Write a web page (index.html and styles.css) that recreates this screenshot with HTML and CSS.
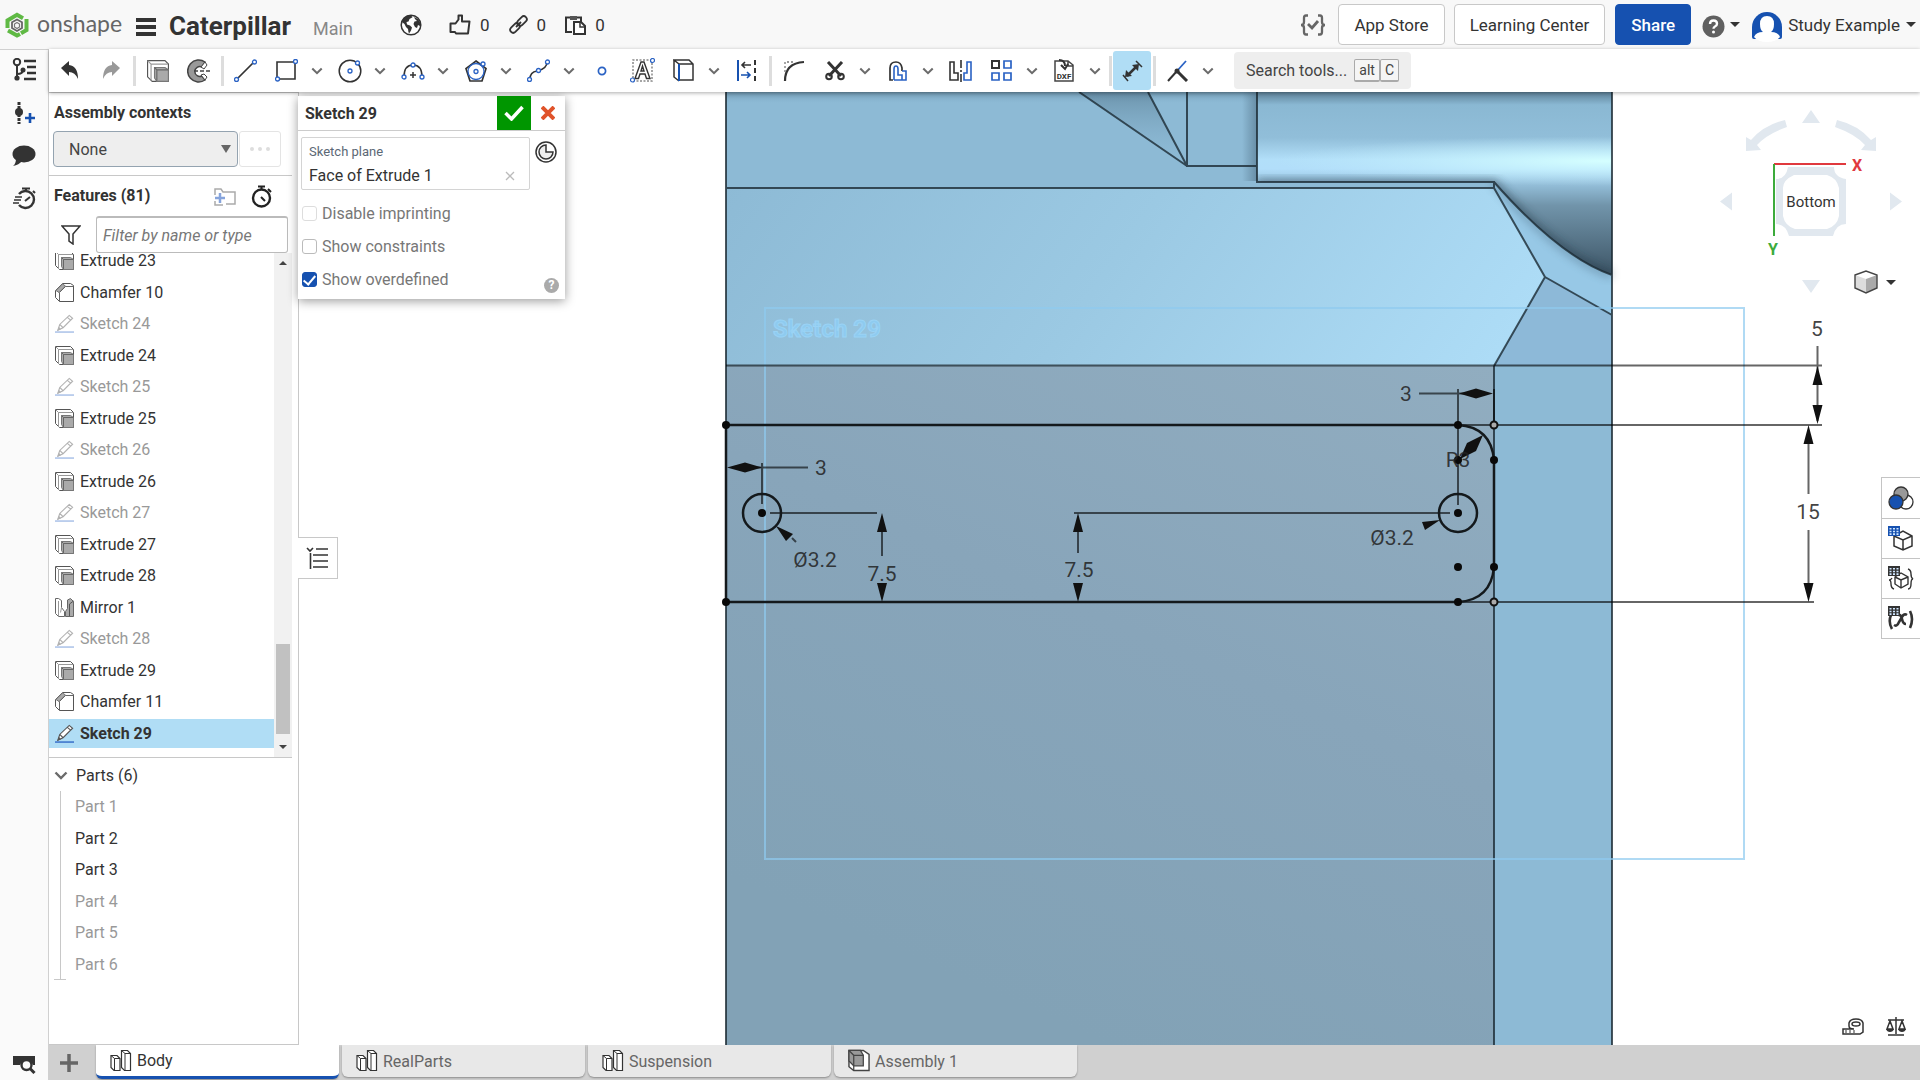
FILE: index.html
```html
<!DOCTYPE html>
<html lang="en">
<head>
<meta charset="utf-8">
<title>Caterpillar | Body</title>
<link rel="stylesheet" href="styles.css">
</head>
<body>
<svg class="defs" aria-hidden="true">
  <symbol id="chev" viewBox="0 0 14 9"><path d="M1.500 1.500l5.500 5.500 5.500-5.500" fill="none" stroke="#6b6b6b" stroke-width="2.400"/></symbol>
  <symbol id="extrude" viewBox="0 0 19 19"><path d="M.5.500h15l3 3v15h-14l-4-4z" fill="#fff" stroke="#555"/><path d="M3.500 18V3.500H18M.5.500l3 3" fill="none" stroke="#999"/><path d="M6.500 6.500h9l3 2v10h-10l-2-3z" fill="#aaa" stroke="#777"/><path d="M8.500 18V8.500h10M6.500 6.500l2 2" fill="none" stroke="#666"/></symbol>
  <symbol id="chamfer" viewBox="0 0 19 19"><path d="M.5 7.500l7-7h8l3 2v16h-14l-4-4z" fill="#fff" stroke="#555"/><path d="M1 7.500L7.500 1l3 2-6.500 6.500z" fill="#aaa" stroke="#777"/><path d="M4.500 18.500v-9l6-6h8" fill="none" stroke="#666"/></symbol>
  <symbol id="pencil" viewBox="0 0 20 20"><path d="M3 17l2-6L15 1.500l3.500 3L8.500 14.500zM5 11l3.500 3.500M13 3.500l3.500 3" fill="#fff" stroke="#555" stroke-width="1.200"/><path d="M2.500 17.500l1.500-4 2.500 2.500z" fill="#555"/><path d="M0 19h20" stroke="#2a62c4" stroke-width="1.400"/></symbol>
  <symbol id="mirror" viewBox="0 0 19 19"><path d="M.5.500h3l3 2v7l3 4v5h-6l-3-3z" fill="#fff" stroke="#666"/><path d="M3.500 3v15.500M6.500 9.500l-1 5" fill="none" stroke="#999"/><path d="M12.500 2l3-1.500 3 3v15h-8v-5l2-3z" fill="#aaa" stroke="#666"/><path d="M14.500 18V6l4-3" fill="none" stroke="#555"/></symbol>
  <symbol id="studio" viewBox="0 0 22 24"><path d="M1 6.500h6l3 3v12H4l-3-3z" fill="#fff" stroke="#333" stroke-width="1.200"/><path d="M1 6.500l3.500 3v12M4.500 9.500H10" fill="none" stroke="#333"/><path d="M11.500 1.500h6l3 3v17h-6l-3-3z" fill="#fff" stroke="#333" stroke-width="1.200"/><path d="M11.500 1.500l3.500 3v17M15 4.500h5.500" fill="none" stroke="#333"/></symbol>
  <symbol id="table" viewBox="0 0 12 10"><path d="M0 0h12v10H0z" fill="currentColor"/><path d="M1.500 2h2v1.600h-2zm3.500 0h2v1.600H5zm3.500 0h2v1.600h-2zm-7 2.700h2v1.600h-2zm3.500 0h2v1.600H5zm3.500 0h2v1.600h-2zm-7 2.600h2V9h-2zm3.500 0h2V9H5zm3.500 0h2V9h-2z" fill="#cfe6ff"/></symbol>
</svg>

<div class="app">
<header class="topbar">
  <a class="brand" href="#">
    <svg width="24" height="26" viewBox="0 0 24 26"><g fill="none" stroke="#5fb944" stroke-width="4"><path d="M2.500 16V8.500L12 2.800l6 3.400"/><path d="M21.500 7v11L16 21.200"/><path d="M3 18.500l9 5 3-1.600"/></g><path d="M12 7.500l5 2.800v5.800l-5 2.900-5-2.900v-5.800z" fill="none" stroke="#666" stroke-width="1.800"/><path d="M12 10.500l2.500 1.500v3L12 16.500 9.500 15v-3z" fill="none" stroke="#777" stroke-width="1.200"/></svg>
    <span class="wordmark">onshape</span>
  </a>
  <button class="icon menu" aria-label="Menu"><svg width="20" height="20" viewBox="0 0 20 20"><path d="M0 3h20M0 10h20M0 17h20" stroke="#333" stroke-width="4"/></svg></button>
  <h1>Caterpillar</h1>
  <span class="branch">Main</span>
  <div class="social">
    <svg class="globe" width="22" height="22" viewBox="0 0 22 22"><circle cx="11" cy="11" r="9.800" fill="#fff" stroke="#333" stroke-width="1.500"/><path d="M3 5c2-3 5-3.800 8-3.800l1.500 2-3 1.800-1 2.500-2 .5.500 2.500 3 1 2 2-1 3-1.500 2.500-1-.5-.5-3.500-2-2-1.500-3L2 8zM14 3l4 2 2.500 4-.5 3-2-1-1 3-2-1-1.500-3 1-2.500 2.500-.5L15 5z" fill="#333"/></svg>
    <button class="stat"><svg width="22" height="22" viewBox="0 0 22 22"><path d="M1.500 9.500h5l3-4V1.500h3.500v6h7.500l-1.500 12H7l-1-1.500H1.500z" fill="none" stroke="#333" stroke-width="2" stroke-linejoin="round"/></svg>0</button>
    <button class="stat"><svg width="19" height="19" viewBox="0 0 19 19"><g fill="none" stroke="#333" stroke-width="1.800"><rect x="7.500" y="3" width="11" height="6" rx="3" transform="rotate(-45 13 6)"/><rect x=".5" y="10" width="11" height="6" rx="3" transform="rotate(-45 6 13)"/><path d="M7 12l5-5"/></g></svg>0</button>
    <button class="stat"><svg width="21" height="20" viewBox="0 0 21 20"><path d="M7 17H1V2.500h15V7" fill="none" stroke="#333" stroke-width="2"/><path d="M5 1h7v4H5z" fill="#555"/><path d="M9 7h7l4 4v8H9z" fill="#fff" stroke="#333" stroke-width="2"/><path d="M15 7v5h5" fill="none" stroke="#333" stroke-width="1.500"/></svg>0</button>
  </div>
  <div class="account">
    <button class="icon" aria-label="Checks"><svg width="26" height="22" viewBox="0 0 26 22"><path d="M8 1.500H6Q4 1.500 4 4v4q0 3-3 3 3 0 3 3v4q0 2.500 2 2.500h2M18 1.500h2q2 0 2 2.500v4q0 3 3 3-3 0-3 3v4q0 2.500-2 2.500h-2" fill="none" stroke="#666" stroke-width="2.300"/><path d="M8 10l4 4 6-7" fill="none" stroke="#666" stroke-width="2.800"/></svg></button>
    <button class="btn">App Store</button>
    <button class="btn learn">Learning Center</button>
    <button class="btn share">Share</button>
    <button class="icon help" aria-label="Help"><svg width="23" height="23" viewBox="0 0 23 23"><circle cx="11.500" cy="11.500" r="11" fill="#606060"/><path d="M8 9q0-3.500 3.500-3.500T15 8.800q0 1.800-2 2.700-1.500.8-1.500 2.300" fill="none" stroke="#fff" stroke-width="2.400"/><circle cx="11.500" cy="17" r="1.500" fill="#fff"/></svg><i class="caret"></i></button>
    <button class="icon user"><svg width="30" height="30" viewBox="0 0 30 30"><path d="M0 15a15 15 0 0 1 30 0v10q0 2-2 2H2q-2 0-2-2z" fill="#1651b0"/><path d="M8 12q0-8 7-8t7 8q0 6-3 8 7 0 9 5-4 5-13 5T2 25q2-5 9-5-3-2-3-8z" fill="#fff"/></svg><span>Study Example</span><i class="caret"></i></button>
  </div>
</header>

<nav class="rail" aria-label="Panels">
  <button class="icon" aria-label="Feature list"><svg width="24" height="23" viewBox="0 0 24 23"><g fill="none" stroke="#333" stroke-width="2"><circle cx="5" cy="4" r="3.200"/><path d="M5 7v13M5 16q6 0 6-4"/><path d="M12 3h12M15 9h9M15 15h9M12 21h12" stroke-width="2.500"/></g><circle cx="5" cy="20" r="2.600" fill="#333"/><circle cx="11" cy="12" r="2.500" fill="#333"/></svg></button>
  <button class="icon" aria-label="Insert"><svg width="22" height="24" viewBox="0 0 22 24"><path d="M6 1v22" stroke="#333" stroke-width="3" stroke-dasharray="3 1"/><circle cx="6" cy="11" r="4" fill="#333"/><path d="M12 17h10M17 12v10" stroke="#1651b0" stroke-width="2.600"/></svg></button>
  <button class="icon" aria-label="Comments"><svg width="24" height="22" viewBox="0 0 24 22"><ellipse cx="12" cy="9" rx="11.500" ry="8.500" fill="#333"/><path d="M4 13q0 6-3 8 6-1 9-5z" fill="#333"/></svg></button>
  <button class="icon" aria-label="Performance"><svg width="23" height="23" viewBox="0 0 23 23"><path d="M6 7a8.500 8.500 0 1 1 0 11" fill="none" stroke="#333" stroke-width="2.400"/><path d="M9 1.500h8M13 2v3M20 4l2 2M12 14l5-4" stroke="#333" stroke-width="2"/><path d="M2 10h7M1 13h7M0 16h6" stroke="#333" stroke-width="1.400"/></svg></button>
  <button class="icon last" aria-label="Search tabs"><svg width="24" height="20" viewBox="0 0 24 20"><path d="M1 2h22v9h-2a7 7 0 0 0-13 0H1z" fill="#333"/><circle cx="14.500" cy="11" r="5" fill="#fafafa" stroke="#333" stroke-width="2.400"/><path d="M18 14.500l4.500 4.500" stroke="#333" stroke-width="3"/></svg></button>
</nav>

<div class="toolbar">
  <button class="tool" aria-label="Undo"><svg width="18" height="19" viewBox="0 0 18 19"><path d="M0 7l8-7v4q9 1 9 14-3-7-9-7v4z" fill="#333"/></svg></button>
  <button class="tool" aria-label="Redo"><svg width="18" height="19" viewBox="0 0 18 19"><path d="M18 7l-8-7v4Q1 5 1 18q3-7 9-7v4z" fill="#999"/></svg></button>
  <i class="sep"></i>
  <button class="tool" aria-label="Extrude"><svg width="22" height="22"><use href="#extrude"/></svg></button>
  <button class="tool" aria-label="Revolve"><svg width="23" height="24" viewBox="0 0 23 24"><path d="M18 3A11 11 0 1 0 18 21l-3-4a5 5 0 1 1 0-9z" fill="#999" stroke="#444" stroke-width="1.500"/><path d="M14 8l4-5 2 3-3 4zM14 16l4 5 2-3-3-3z" fill="#fff" stroke="#444"/><path d="M7 12h16" stroke="#444" stroke-width="1.500" stroke-dasharray="4 2"/></svg></button>
  <i class="sep"></i>
  <button class="tool" aria-label="Line"><svg width="23" height="23" viewBox="0 0 23 23"><path d="M4 19L19 4" stroke="#333" stroke-width="1.700"/><g fill="#fff" stroke="#2a62c4" stroke-width="1.300"><circle cx="20.500" cy="3" r="2"/><circle cx="2.500" cy="20.500" r="2"/></g></svg></button>
  <button class="tool" aria-label="Rectangle"><svg width="23" height="23" viewBox="0 0 23 23"><path d="M2 3h18v17H2z" fill="none" stroke="#333" stroke-width="1.600"/><g fill="#fff" stroke="#2a62c4" stroke-width="1.300"><circle cx="20.500" cy="2.500" r="2"/><circle cx="2.500" cy="20" r="2"/></g></svg></button>
  <button class="drop" aria-label="More rectangles"><svg width="12" height="8"><use href="#chev"/></svg></button>
  <button class="tool" aria-label="Circle"><svg width="24" height="24" viewBox="0 0 24 24"><circle cx="12" cy="12" r="10.800" fill="none" stroke="#333" stroke-width="1.500"/><g fill="#fff" stroke="#2a62c4" stroke-width="1.300"><circle cx="12" cy="12" r="2"/><circle cx="19.500" cy="4" r="2"/></g></svg></button>
  <button class="drop" aria-label="More circles"><svg width="12" height="8"><use href="#chev"/></svg></button>
  <button class="tool" aria-label="Arc"><svg width="24" height="18" viewBox="0 0 24 18"><path d="M3 15q0-12 9-12t9 12" fill="none" stroke="#333" stroke-width="1.600"/><path d="M9 13h6M12 10v6" stroke="#333" stroke-width="1.500"/><g fill="#fff" stroke="#2a62c4" stroke-width="1.300"><circle cx="12" cy="3" r="2"/><circle cx="3" cy="15" r="2"/><circle cx="21" cy="15" r="2"/></g></svg></button>
  <button class="drop" aria-label="More arcs"><svg width="12" height="8"><use href="#chev"/></svg></button>
  <button class="tool" aria-label="Polygon"><svg width="24" height="24" viewBox="0 0 24 24"><path d="M12 2l10 7.500-4 12.500H6L2 9.500z" fill="none" stroke="#333" stroke-width="1.700"/><circle cx="12" cy="12.500" r="8" fill="none" stroke="#2a62c4" stroke-width="1.300"/><g fill="#fff" stroke="#2a62c4" stroke-width="1.300"><circle cx="12" cy="12.500" r="2"/><circle cx="19" cy="5" r="2"/></g></svg></button>
  <button class="drop" aria-label="More polygons"><svg width="12" height="8"><use href="#chev"/></svg></button>
  <button class="tool" aria-label="Spline"><svg width="23" height="23" viewBox="0 0 23 23"><path d="M3 20q0-7 7-8 10-2 10-9" fill="none" stroke="#333" stroke-width="1.600"/><g fill="#fff" stroke="#2a62c4" stroke-width="1.300"><circle cx="20.500" cy="3" r="2"/><circle cx="11.500" cy="11.500" r="2"/><circle cx="2.500" cy="20.500" r="2"/></g></svg></button>
  <button class="drop" aria-label="More splines"><svg width="12" height="8"><use href="#chev"/></svg></button>
  <button class="tool" aria-label="Point"><svg width="10" height="10" viewBox="0 0 10 10"><circle cx="5" cy="5" r="3.600" fill="#fff" stroke="#2a62c4" stroke-width="1.700"/></svg></button>
  <button class="tool" aria-label="Text"><svg width="25" height="25" viewBox="0 0 25 25"><path d="M3 20V2h18M22 5v18H5" fill="none" stroke="#888" stroke-width="1.500" stroke-dasharray="2 1.500"/><path d="M5 20.500L11 4h3l6 16.500h-3.500L15 16h-5l-1.500 4.500zM11 13h3l-1.500-5z" fill="#fff" stroke="#333" stroke-width="1.400"/><g fill="#fff" stroke="#2a62c4" stroke-width="1.200"><circle cx="22.500" cy="2.500" r="2"/><circle cx="2.500" cy="22" r="2"/></g></svg></button>
  <button class="tool" aria-label="Use"><svg width="21" height="23" viewBox="0 0 21 23"><path d="M6 5L1 1h15l4 4v16H6M6 5h14M1 1v17l5 4" fill="none" stroke="#333" stroke-width="1.500"/><path d="M6 5v17" stroke="#1651b0" stroke-width="2"/></svg></button>
  <button class="drop" aria-label="More use tools"><svg width="12" height="8"><use href="#chev"/></svg></button>
  <button class="tool" aria-label="Construction"><svg width="21" height="23" viewBox="0 0 21 23"><path d="M2 1v21" stroke="#1651b0" stroke-width="2"/><path d="M19 1v21" stroke="#333" stroke-width="2" stroke-dasharray="5 3"/><path d="M6 6h9M9 3L6 6l3 3" fill="none" stroke="#333" stroke-width="1.600"/><path d="M5 16h9M11 13l3 3-3 3" fill="none" stroke="#1651b0" stroke-width="1.600"/></svg></button>
  <i class="sep"></i>
  <button class="tool" aria-label="Fillet"><svg width="22" height="22" viewBox="0 0 22 22"><path d="M2 21Q2 3 21 2" fill="none" stroke="#333" stroke-width="2.200"/><path d="M2 12V2h10" fill="none" stroke="#777" stroke-width="1.300" stroke-dasharray="2 2"/></svg></button>
  <button class="tool" aria-label="Trim"><svg width="20" height="20" viewBox="0 0 20 20"><path d="M3 1l13 14M17 1L4 15" stroke="#333" stroke-width="3"/><g fill="none" stroke="#333" stroke-width="2"><circle cx="4" cy="15.500" r="2.800"/><circle cx="16" cy="15.500" r="2.800"/></g></svg></button>
  <button class="drop" aria-label="More trim tools"><svg width="12" height="8"><use href="#chev"/></svg></button>
  <button class="tool" aria-label="Offset"><svg width="20" height="22" viewBox="0 0 20 22"><path d="M5 20H2V8q0-6 6-6 5 0 6 6v3" fill="none" stroke="#333" stroke-width="1.700"/><path d="M6 20V9q0-3 2-3t2 3v6h4v5H6M14 11h4v9h-4" fill="none" stroke="#2a62c4" stroke-width="1.600"/></svg></button>
  <button class="drop" aria-label="More offset tools"><svg width="12" height="8"><use href="#chev"/></svg></button>
  <button class="tool" aria-label="Mirror"><svg width="23" height="22" viewBox="0 0 23 22"><path d="M1 2h4v11h4v7H1z" fill="none" stroke="#333" stroke-width="1.600"/><path d="M12 0v22" stroke="#333" stroke-width="1.600" stroke-dasharray="8 2 2 2"/><path d="M22 2h-4v11h-3v7h7z" fill="none" stroke="#2a62c4" stroke-width="1.600"/></svg></button>
  <button class="tool" aria-label="Pattern"><svg width="21" height="21" viewBox="0 0 21 21"><path d="M1 1h7v7H1z" fill="none" stroke="#333" stroke-width="2"/><path d="M13 1h7v7h-7zM1 13h7v7H1zM13 13h7v7h-7z" fill="none" stroke="#2a62c4" stroke-width="1.700"/></svg></button>
  <button class="drop" aria-label="More patterns"><svg width="12" height="8"><use href="#chev"/></svg></button>
  <button class="tool" aria-label="DXF"><svg width="21" height="23" viewBox="0 0 21 23"><path d="M1 2h13l5 4v16H1zM14 2v5h5" fill="#fff" stroke="#444" stroke-width="1.500"/><path d="M5 1q6 0 6 6M7 6l4 4 3-5" fill="none" stroke="#333" stroke-width="2"/><text x="10" y="20" class="dxf">DXF</text></svg></button>
  <button class="drop" aria-label="More import tools"><svg width="12" height="8"><use href="#chev"/></svg></button>
  <i class="sep"></i>
  <button class="tool active" aria-label="Dimension"><svg width="21" height="22" viewBox="0 0 21 22"><path d="M5 16L15 6" stroke="#333" stroke-width="2.500"/><path d="M3 17l1-7 6 6zM17 4l-1 7-6-6z" fill="#333"/><path d="M1 15l5 6M14 1l6 6" stroke="#333" stroke-width="1.500"/></svg></button>
  <i class="sep"></i>
  <button class="tool" aria-label="Constraint"><svg width="22" height="22" viewBox="0 0 22 22"><path d="M1 21l9-10" fill="none" stroke="#333" stroke-width="2"/><path d="M10 11l9-10" stroke="#2a62c4" stroke-width="1.800"/><path d="M10 11l10 10" stroke="#333" stroke-width="3"/><circle cx="10" cy="11" r="2.500" fill="#333"/></svg></button>
  <button class="drop" aria-label="More constraints"><svg width="12" height="8"><use href="#chev"/></svg></button>
  <button class="search"><span>Search tools...</span><kbd>alt</kbd><kbd>C</kbd></button>
</div>

<aside class="panel">
  <section class="contexts">
    <h2><label for="ctx">Assembly contexts</label></h2>
    <div class="ctxrow"><div class="selectwrap"><select id="ctx"><option>None</option></select></div><button class="dots" aria-label="Context options"><i></i><i></i><i></i></button></div>
  </section>
  <section class="features">
    <div class="fhead"><h2>Features (81)</h2>
      <svg class="folder" width="22" height="19" viewBox="0 0 22 19"><path d="M1 8V2h6l2 3h12v12H12M1 14v4h8" fill="none" stroke="#aaa" stroke-width="1.500"/><path d="M1 11h10M6 6v10" stroke="#86a4dc" stroke-width="2.500"/></svg>
      <svg width="21" height="23" viewBox="0 0 21 23"><circle cx="10.500" cy="13" r="8.500" fill="none" stroke="#222" stroke-width="2.400"/><path d="M7 1.500h7M10.500 1v4M17 4l3 3M10 12l4 4" stroke="#222" stroke-width="2"/></svg>
    </div>
    <div class="filter"><svg width="20" height="20" viewBox="0 0 20 20"><path d="M1 1h18l-7 8v10l-4-3V9z" fill="none" stroke="#333" stroke-width="1.500"/></svg><input type="text" aria-label="Filter features" placeholder="Filter by name or type"></div>
    <div class="listbox">
      <ul class="list">
        <li><svg><use href="#extrude"/></svg>Extrude 23</li>
        <li><svg><use href="#chamfer"/></svg>Chamfer 10</li>
        <li class="off"><svg><use href="#pencil"/></svg>Sketch 24</li>
        <li><svg><use href="#extrude"/></svg>Extrude 24</li>
        <li class="off"><svg><use href="#pencil"/></svg>Sketch 25</li>
        <li><svg><use href="#extrude"/></svg>Extrude 25</li>
        <li class="off"><svg><use href="#pencil"/></svg>Sketch 26</li>
        <li><svg><use href="#extrude"/></svg>Extrude 26</li>
        <li class="off"><svg><use href="#pencil"/></svg>Sketch 27</li>
        <li><svg><use href="#extrude"/></svg>Extrude 27</li>
        <li><svg><use href="#extrude"/></svg>Extrude 28</li>
        <li><svg><use href="#mirror"/></svg>Mirror 1</li>
        <li class="off"><svg><use href="#pencil"/></svg>Sketch 28</li>
        <li><svg><use href="#extrude"/></svg>Extrude 29</li>
        <li><svg><use href="#chamfer"/></svg>Chamfer 11</li>
        <li class="sel"><svg><use href="#pencil"/></svg>Sketch 29</li>
      </ul>
      <div class="scroll"><i class="up"></i><i class="thumb"></i><i class="down"></i></div>
    </div>
  </section>
  <section class="parts">
    <h3><svg width="14" height="9"><use href="#chev"/></svg>Parts (6)</h3>
    <ul><li class="off">Part 1</li><li>Part 2</li><li>Part 3</li><li class="off">Part 4</li><li class="off">Part 5</li><li class="off">Part 6</li></ul>
  </section>
</aside>

<main class="view">
  <svg class="model" viewBox="299 92 1621 953" preserveAspectRatio="xMidYMid slice">
    <defs>
      <linearGradient id="gband" gradientUnits="userSpaceOnUse" x1="850" y1="0" x2="1450" y2="420"><stop offset="0" stop-color="#8dbad5"/><stop offset=".5" stop-color="#9bc9e3"/><stop offset="1" stop-color="#addcf6"/></linearGradient>
      <linearGradient id="gface" x1="1" y1="0" x2="0.500" y2="1"><stop offset="0" stop-color="#91adc0"/><stop offset=".5" stop-color="#88a5ba"/><stop offset="1" stop-color="#82a2b6"/></linearGradient>
      <linearGradient id="gcyl" x1="0" y1="0" x2="0" y2="1"><stop offset="0" stop-color="#5d8097"/><stop offset=".07" stop-color="#8ab8d3"/><stop offset=".25" stop-color="#91bed9"/><stop offset=".37" stop-color="#b2dff9"/><stop offset=".42" stop-color="#b2defa"/><stop offset=".52" stop-color="#8fb9d3"/><stop offset=".62" stop-color="#7194aa"/><stop offset="1" stop-color="#3d5566"/></linearGradient>
      <linearGradient id="gshade" x1="0" y1="0" x2="0" y2="1"><stop offset="0" stop-color="#567a91" stop-opacity=".6"/><stop offset="1" stop-color="#8ab8d3" stop-opacity="0"/></linearGradient>
      <linearGradient id="gedge"><stop offset="0" stop-color="#587b92" stop-opacity="0"/><stop offset="1" stop-color="#587b92" stop-opacity=".7"/></linearGradient>
      <radialGradient id="gshine"><stop offset="0" stop-color="#d5ffff"/><stop offset="1" stop-color="#c4f0ff" stop-opacity="0"/></radialGradient>
      <clipPath id="ccyl"><path d="M1257 92h355v183Q1560 257 1494 182H1257z"/></clipPath>
      <filter id="soft"><feGaussianBlur stdDeviation="5"/></filter>
    </defs>
    <path d="M726 92h886v953H726z" fill="#8dbad5"/>
    <path d="M726 92h531v12H726z" fill="url(#gshade)"/>
    <path d="M1079 92h69l39 74z" fill="url(#gshade)"/>
    <path d="M1242 92h15v89h-15z" fill="url(#gedge)"/>
    <path d="M726 188h768l51 89-51 89H726z" fill="url(#gband)"/>
    <path d="M1494 182q66 75 118 93v40l-67-38-51-89z" fill="#97c8e6"/>
    <path d="M1494 182q66 75 118 93" fill="none" stroke="#426076" stroke-width="7" opacity=".45" filter="url(#soft)"/>
    <path d="M1545 277l67 38v51h-118z" fill="#8db9d8"/>
    <path d="M726 366h768v679H726z" fill="url(#gface)"/>
    <g clip-path="url(#ccyl)"><path d="M1257 92h355v183h-355z" fill="url(#gcyl)"/><ellipse cx="1605" cy="161" rx="330" ry="25" fill="url(#gshine)"/><path d="M1257 184h237q66 75 118 93" fill="none" stroke="#223847" stroke-width="8" opacity=".6" filter="url(#soft)"/></g>
    <g class="edge"><path d="M1079 92l108 74-39-74M1187 92v74h70M1257 92v90h237v6H726M1494 182q66 75 118 93M1494 188l51 89-51 89M1545 277l67 38M726 92v953M1612 92v953M1494 366v679"/></g>
    <rect x="765" y="308" width="979" height="551" class="plane"/>
    <text x="773" y="337" class="planename">Sketch 29</text>
    <g class="thin"><path d="M726 365.500h1096M726 425h1096M726 602h1088M762 463v41M770 513h107M1074 513h376M1458 389v116M1494 389v36M745 467.500h63M1419 393.500h60M882 530v26M1078 530v23M1817.500 346v75M1808.500 440v54M1808.500 530v60M792 538l4 4"/></g>
    <g class="bold"><path d="M1458 425H726v177h732M1494 460v107M1458 425q33 2 36 35M1494 567q-3 33-36 35"/><circle cx="762" cy="513" r="19"/><circle cx="1458" cy="513" r="19"/></g>
    <path class="arrow" d="M727 467.500l18-5 17 5-17 5zM1459 393.500l17-5 17 5-17 5zM882 513l5 19h-10zM882 602l5-19h-10zM1078 513l5 19h-10zM1078 602l5-19h-10zM1817.500 366l5 19h-10zM1817.500 424l5-19h-10zM1808.500 425l5 19h-10zM1808.500 602l5-19h-10zM776 526l17 8-7 7zM1440 520l-18 2 3 8zM1483 435l-16 8-7 16 16-8z"/>
    <g class="dots-g"><circle cx="726" cy="425" r="4"/><circle cx="726" cy="602" r="4"/><circle cx="762" cy="513" r="4"/><circle cx="1458" cy="425" r="4"/><circle cx="1458" cy="460" r="4"/><circle cx="1494" cy="460" r="4"/><circle cx="1458" cy="513" r="4"/><circle cx="1458" cy="567" r="4"/><circle cx="1494" cy="567" r="4"/><circle cx="1458" cy="602" r="4"/></g>
    <g class="open"><circle cx="1494" cy="425" r="3.500"/><circle cx="1494" cy="602" r="3.500"/></g>
    <g class="dim"><text x="821" y="475">3</text><text x="1406" y="401">3</text><text x="815" y="567">Ø3.2</text><text x="882" y="581">7.5</text><text x="1079" y="577">7.5</text><text x="1392" y="545">Ø3.2</text><text x="1458" y="467">R3</text><text x="1817" y="336">5</text><text x="1808" y="519">15</text></g>
  </svg>

  <svg class="cube" width="184" height="190" viewBox="1719 108 184 190">
    <g fill="#e1e8ef"><path d="M1811 110l9 13h-18zM1811 293l9-13h-18zM1720 201.500l12-9v18zM1902 201.500l-12-9v18z"/><path d="M1785 120l2 7q-20 7-30 18l4 5-15 1v-14l5 3q13-15 34-20zM1837 120l-2 7q20 7 30 18l-4 5 15 1v-14l-5 3q-13-15-34-20z"/><path fill-rule="evenodd" d="M1788 167h46q0 10 12 12v45q-10 0-13 12h-44q-3-12-13-12v-45q10 0 12-12zm6 8q-11 5-11 13v28q2 10 12 13h32q10-3 12-13v-28q-2-10-12-13z"/></g>
    <path d="M1774 164h72" stroke="#e0393e" stroke-width="2"/><path d="M1774 164v72" stroke="#3cab3c" stroke-width="2"/>
    <text x="1857" y="171" class="axis x">X</text><text x="1773" y="255" class="axis y">Y</text><text x="1811" y="207" class="facename">Bottom</text>
  </svg>
  <button class="icon display" aria-label="Display mode"><svg width="24" height="24" viewBox="0 0 24 24"><path d="M1 5l11-4 11 4-11 4z" fill="#fff"/><path d="M12 9l11-4v13l-11 5z" fill="#aaa"/><path d="M1 5l11 4v14L1 18z" fill="#ddd"/><path d="M1 5l11-4 11 4v13l-11 5-11-5z" fill="none" stroke="#444" stroke-width="1.400"/></svg><i class="caret"></i></button>

  <div class="sidebtns">
    <button aria-label="Appearance"><svg width="26" height="24" viewBox="0 0 26 24"><g stroke="#333" stroke-width="1.300"><circle cx="18" cy="16" r="7" fill="#fff"/><circle cx="13" cy="8" r="7" fill="#999"/><circle cx="8" cy="16" r="7" fill="#1651b0"/></g></svg></button>
    <button aria-label="Configurations"><svg width="26" height="26" viewBox="0 0 26 26"><path d="M6 10l9-5 9 5v10l-9 4-9-4zM6 10l9 4 9-4M15 14v10" fill="#fff" stroke="#333" stroke-width="1.500"/><use href="#table" width="12" height="10" color="#1651b0"/></svg></button>
    <button aria-label="Custom tables"><svg width="26" height="26" viewBox="0 0 26 26"><path d="M7 11l6-4 7 4v7l-7 4-6-4zM7 11l6 3 7-3M13 14v8M4 12q-1 2-3 2 2 0 2 4t3 5M20 3q3 1 3 5t2 5q-2 0-2 5t-3 5" fill="none" stroke="#333" stroke-width="1.400"/><use href="#table" width="12" height="10" color="#333"/></svg></button>
    <button aria-label="Variables"><svg width="26" height="26" viewBox="0 0 26 26"><path d="M3 9q-3 7 1 14M22 5q4 8 0 17" fill="none" stroke="#333" stroke-width="2.600"/><path d="M6 19q3 2 5-3l3-5q2-4 5-2M10 9q3-1 4 4t4 5" fill="none" stroke="#333" stroke-width="2.600"/><use href="#table" width="12" height="10" color="#333"/></svg></button>
  </div>
  <div class="measure">
    <button class="icon" aria-label="Measure"><svg width="22" height="18" viewBox="0 0 22 18"><path d="M7 8V5q1-4 7-4t7 4v9l-3 2H1v-5h11q-5 0-5-3z" fill="#fff" stroke="#333" stroke-width="1.500"/><ellipse cx="14" cy="6" rx="4" ry="2" fill="none" stroke="#333" stroke-width="1.500"/><path d="M4 12v3M8 12v3M12 12v3" stroke="#333"/></svg></button>
    <button class="icon" aria-label="Mass properties"><svg width="20" height="20" viewBox="0 0 20 20"><path d="M10 0v17M2 3h16M2 18h16M4 4L1 12h6zM16 4l-3 8h6z" fill="none" stroke="#333" stroke-width="1.500"/><path d="M0 12h8q-1 3-4 3t-4-3M12 12h8q-1 3-4 3t-4-3" fill="#333"/></svg></button>
  </div>

  <button class="toggle" aria-label="Toggle list"><svg width="22" height="22" viewBox="0 0 22 22"><path d="M1 1l3 3 3-3M4.500 6v16M10 2h12M7 8h15M7 14h15M7 20h15" fill="none" stroke="#333" stroke-width="1.600"/></svg></button>

  <form class="dialog">
    <div class="dhead"><h2>Sketch 29</h2><button type="button" class="ok" aria-label="Accept"><svg width="20" height="16" viewBox="0 0 20 16"><path d="M1.500 8l6 6L18.500 2" fill="none" stroke="#fff" stroke-width="3.500"/></svg></button><button type="button" class="no" aria-label="Cancel"><svg width="14" height="14" viewBox="0 0 14 14"><path d="M1 1l12 12M13 1L1 13" stroke="#e0532a" stroke-width="4"/></svg></button></div>
    <div class="dbody">
      <div class="planefield"><div class="field"><span class="lab">Sketch plane</span><span class="val">Face of Extrude 1</span><button type="button" class="clear" aria-label="Clear"><svg width="10" height="10" viewBox="0 0 10 10"><path d="M1 1l8 8M9 1L1 9" stroke="#bbb" stroke-width="1.300"/></svg></button></div>
      <svg width="22" height="22" viewBox="0 0 22 22"><circle cx="11" cy="11" r="10" fill="#fff" stroke="#333" stroke-width="1.500"/><path d="M11 4a7 7 0 1 0 7 7h-7z" fill="#eee" stroke="#333" stroke-width="1.500"/></svg></div>
      <label><input type="checkbox" disabled>Disable imprinting</label>
      <label><input type="checkbox">Show constraints</label>
      <label><input type="checkbox" checked>Show overdefined</label>
      <button type="button" class="dhelp" aria-label="Help">?</button>
    </div>
  </form>
</main>

<footer class="tabs">
  <button class="add" aria-label="Add tab"><svg width="18" height="18" viewBox="0 0 18 18"><path d="M0 9h18M9 0v18" stroke="#666" stroke-width="3.500"/></svg></button>
  <button class="tab current"><svg width="22" height="24"><use href="#studio"/></svg>Body</button>
  <button class="tab"><svg width="22" height="24"><use href="#studio"/></svg>RealParts</button>
  <button class="tab"><svg width="22" height="24"><use href="#studio"/></svg>Suspension</button>
  <button class="tab"><svg width="22" height="24" viewBox="0 0 23 24"><path d="M1 1h15l6 4v17H6l-5-4z" fill="#fff" stroke="#444" stroke-width="1.500"/><path d="M1 1h12l3 5v11H6l-5-5z" fill="#999" stroke="#444" stroke-width="1.300"/><path d="M1 1l5 5h10M6 6v16" fill="none" stroke="#444" stroke-width="1.300"/></svg>Assembly 1</button>
</footer>
</div>
</body>
</html>
```
FILE: styles.css
```css
* { box-sizing: border-box; }
html, body { height: 100%; margin: 0; }
body { font-family: Roboto, "Liberation Sans", sans-serif; font-size: 16px; color: #333; background: #fff; overflow: hidden; }
button { font: inherit; color: inherit; padding: 0; border: 0; background: none; }
h1, h2, h3, ul { margin: 0; padding: 0; }
ul { list-style: none; }
svg { display: block; flex: none; }
.defs { position: absolute; width: 0; height: 0; }

.app { height: 100vh; display: grid; grid-template: 49px 43px minmax(0, 1fr) 35px / 49px 250px minmax(0, 1fr); }
.icon { display: flex; align-items: center; justify-content: center; }
.caret { border: 5px solid transparent; border-top-color: #333; border-bottom: 0; }

.topbar { grid-column: 1 / -1; background: #f8f8f8; display: flex; align-items: center; padding: 0 4px 0 5px; }
.brand { display: flex; align-items: center; gap: 8px; color: #666; text-decoration: none; width: 131px; }
.wordmark { font-family: Lato, sans-serif; font-size: 23px; line-height: 24px; padding-bottom: 4px; }
.menu { margin-top: 4px; }
h1 { font-size: 26px; line-height: 30px; margin: 2px 0 0 13px; width: 144px; }
.branch { font-size: 18px; color: #888; margin-top: 7px; width: 87px; }
.social { display: flex; align-items: center; font-size: 17px; }
.globe { margin-right: 27px; }
.stat { display: flex; align-items: center; gap: 9px; margin-right: 19px; }
.account { margin-left: auto; display: flex; align-items: center; font-size: 17px; }
.btn { height: 41px; padding: 0 15px; border: 1px solid #c8c8c8; border-radius: 4px; background: #fff; margin-left: 12px; white-space: nowrap; }
.learn { margin-left: 9px; }
.share { margin-left: 10px; background: #1651b0; border-color: #1651b0; color: #fff; font-weight: 500; padding: 0 15px; }
.help { margin-left: 11px; gap: 5px; }
.help svg { margin-top: 4px; }
.user { margin-left: 12px; gap: 6px; white-space: nowrap; }
.user svg { margin-top: 4px; }

.rail { grid-row: 2 / 5; grid-column: 1; background: #fafafa; border-right: 1px solid #d0d0d0; border-top: 1px solid #d0d0d0; display: flex; flex-direction: column; align-items: center; padding: 8px 0 6px; gap: 20px; }
.rail .last { margin-top: auto; }

.toolbar { grid-row: 2; grid-column: 2 / 4; display: flex; align-items: center; position: relative; z-index: 4; background: #fff; box-shadow: 0 1px 4px #0005; }
.tool { width: 41px; height: 39px; display: grid; place-items: center; }
.drop { width: 22px; height: 39px; display: grid; place-items: center; padding-right: 2px; }
.sep { width: 3px; height: 30px; margin: 0 1px 0 2px; background: #ddd; }
.active { width: 38px; background: #b0ddf5; border-radius: 3px; }
.dxf { font-size: 8px; font-weight: 700; text-anchor: middle; fill: #333; }
.search { display: flex; align-items: center; height: 37px; width: 177px; margin-left: 14px; padding: 0 12px; background: #eee; border-radius: 4px; color: #444; }
.search span { flex: 1; text-align: left; white-space: nowrap; }
kbd { font: 14px/20px Roboto, sans-serif; border: 1px solid #aaa; border-bottom-width: 2px; border-radius: 2px; padding: 0 4px; background: #f5f5f5; }

.panel { grid-row: 3; grid-column: 2; border: 1px solid #c8c8c8; border-left: 0; background: #fff; position: relative; z-index: 3; padding-right: 6px; display: flex; flex-direction: column; min-height: 0; }
h2 { font-size: 16px; line-height: 20px; font-weight: 700; }
.contexts { padding: 10px 11px 8px 4px; border-bottom: 1px solid #c8c8c8; }
.contexts h2 { padding-left: 1px; }
.ctxrow { display: flex; gap: 1px; margin-top: 8px; }
.selectwrap { flex: 1; position: relative; }
.selectwrap::after { content: ""; position: absolute; right: 7px; top: 14px; border: 5px solid transparent; border-top: 8px solid #666; border-bottom: 0; }
select { appearance: none; font: inherit; color: #444; width: 100%; height: 36px; padding: 0 15px; background: #eee; border: 1px solid #94a3b0; border-radius: 4px; }
.dots { width: 42px; border: 1px solid #e4e4e4; border-radius: 3px; display: flex; gap: 4px; align-items: center; justify-content: center; }
.dots i { width: 4px; height: 4px; border-radius: 50%; background: #ddd; }
.fhead { display: flex; align-items: center; height: 40px; padding: 0 20px 0 5px; }
.fhead h2 { flex: 1; }
.folder { margin-right: 15px; }
.filter { display: flex; align-items: center; justify-content: space-between; padding: 0 4px 0 12px; }
.filter input { width: 192px; height: 37px; font: italic 16px Roboto, sans-serif; border: 1px solid #bbb; border-top-width: 2px; border-radius: 3px; padding: 0 6px; }
.filter input::placeholder { color: #777; }
.listbox { height: 504px; display: flex; overflow: hidden; }
.list { flex: 1; height: 504px; margin-top: -8px; display: flex; flex-direction: column; }
.list li { flex: 1; display: flex; align-items: center; gap: 6px; padding-left: 6px; border: solid transparent; border-width: 1px 0; background-clip: padding-box; }
.list svg { width: 19px; height: 19px; }
.off { color: #999; }
.off svg { opacity: .45; }
.list .sel { background-color: #b0ddf5; font-weight: 700; }
.scroll { width: 18px; background: #f1f1f1; display: flex; flex-direction: column; align-items: center; padding: 8px 0; }
.up { border: 4px solid transparent; border-bottom-color: #444; border-top: 0; }
.thumb { width: 14px; height: 90px; background: #c1c1c1; margin: auto 0 11px; }
.down { border: 4px solid transparent; border-top-color: #444; border-bottom: 0; }
.parts { border-top: 1px solid #c8c8c8; padding-left: 5px; }
h3 { font-size: 16px; font-weight: 400; display: flex; align-items: center; gap: 8px; height: 33px; padding-top: 2px; }
.parts ul { height: 189px; margin-left: 6px; padding-left: 14px; border-left: 1px solid #c8c8c8; display: flex; flex-direction: column; position: relative; }
.parts ul::after { content: ""; position: absolute; left: -7px; bottom: 0; width: 12px; border-bottom: 1px solid #c8c8c8; }
.parts li { flex: 1; display: flex; align-items: center; }

.view { grid-row: 3; grid-column: 3; position: relative; z-index: 3; min-height: 0; background: #fff; }
.model { position: absolute; inset: 0; width: 100%; height: 100%; }
.edge path { fill: none; stroke: #1c2a33; stroke-width: 2; stroke-opacity: .8; }
.thin path { stroke: #000; stroke-width: 2; stroke-opacity: .6; }
.bold path, .bold circle { fill: none; stroke: #14191c; stroke-width: 2.500px; }
.arrow { fill: #111; }
.dots-g { fill: #090909; }
.open circle { fill: #aaa; stroke: #111; stroke-width: 2; }
.plane { fill: none; stroke: #8ecbf0; stroke-opacity: .7; stroke-width: 2; }
.planename { font-size: 24px; font-weight: 700; fill: #8ecbf0; stroke: #9ad3f5; }
.dim { font-size: 21px; text-anchor: middle; fill: #222; fill-opacity: .85; }
.cube { position: absolute; top: 16px; right: 17px; }
.axis { font-size: 16px; font-weight: 700; text-anchor: middle; }
.x { fill: #e0393e; }
.y { fill: #3cab3c; }
.facename { font-size: 15px; text-anchor: middle; fill: #333; }
.display { position: absolute; top: 178px; right: 24px; gap: 8px; }
.sidebtns { position: absolute; right: 0; top: 385px; width: 39px; border: 1px solid #c4c4c4; border-right: 0; background: #fff; }
.sidebtns button { display: grid; place-items: center; width: 38px; height: 40px; }
.sidebtns button + button { border-top: 1px solid #c4c4c4; }
.measure { position: absolute; right: 14px; bottom: 8px; display: flex; align-items: center; gap: 22px; }
.toggle { position: absolute; left: -1px; top: 445px; width: 40px; height: 42px; display: grid; place-items: center; padding-right: 2px; background: #fff; border: 1px solid #c8c8c8; border-left: 0; }

.dialog { position: absolute; left: -1px; top: 4px; width: 267px; background: #fff; box-shadow: 0 2px 10px #0006; }
.dhead { display: flex; height: 35px; border-bottom: 1px solid #ccc; padding-left: 7px; align-items: center; }
.dhead h2 { flex: 1; padding-top: 2px; font-weight: 700; }
.ok { width: 34px; height: 34px; background: #009600; display: grid; place-items: center; }
.no { width: 34px; height: 34px; display: grid; place-items: center; }
.dbody { padding: 6px 8px 3px 3px; position: relative; }
.planefield { display: flex; justify-content: space-between; align-items: flex-start; margin-bottom: 7px; }
.planefield > svg { margin-top: 4px; }
.field { width: 229px; height: 53px; border: 1px solid #d4d4d4; border-radius: 2px; padding: 5px 7px; position: relative; display: flex; flex-direction: column; }
.lab { font-size: 13px; line-height: 17px; color: #5b6875; }
.val { line-height: 32px; }
.clear { position: absolute; right: 14px; bottom: 8px; }
.dbody label { display: flex; align-items: center; gap: 5px; height: 33px; padding-left: 1px; color: #777; }
.dbody input { appearance: none; width: 15px; height: 15px; margin: 0; border: 1px solid #bbb; border-radius: 3px; background: #fff; display: grid; place-items: center; }
.dbody input:disabled { border-color: #ddd; }
.dbody input:checked { background: #1651b0; border-color: #1651b0; }
.dbody input:checked::after { content: ""; width: 5px; height: 10px; border: solid #fff; border-width: 0 2px 2px 0; transform: translateY(-1px) rotate(40deg); }
.dhelp { position: absolute; right: 6px; bottom: 6px; width: 15px; height: 15px; border-radius: 50%; background: #aaa; color: #fff; font-size: 12px; line-height: 15px; font-weight: 700; }

.tabs { grid-row: 4; grid-column: 2 / 4; background: #d0d0d0; display: flex; gap: 3px; position: relative; z-index: 2; }
.add { width: 44px; display: grid; place-items: center; padding-right: 4px; }
.tab { width: 243px; height: 32px; background: #e8e8e8; border-radius: 0 0 6px 6px; box-shadow: 0 1px 2px #0005; display: flex; align-items: center; gap: 5px; padding-left: 14px; color: #666; }
.current { background: #fff; height: 34px; border-bottom: 3px solid #1651b0; color: #333; }
```
